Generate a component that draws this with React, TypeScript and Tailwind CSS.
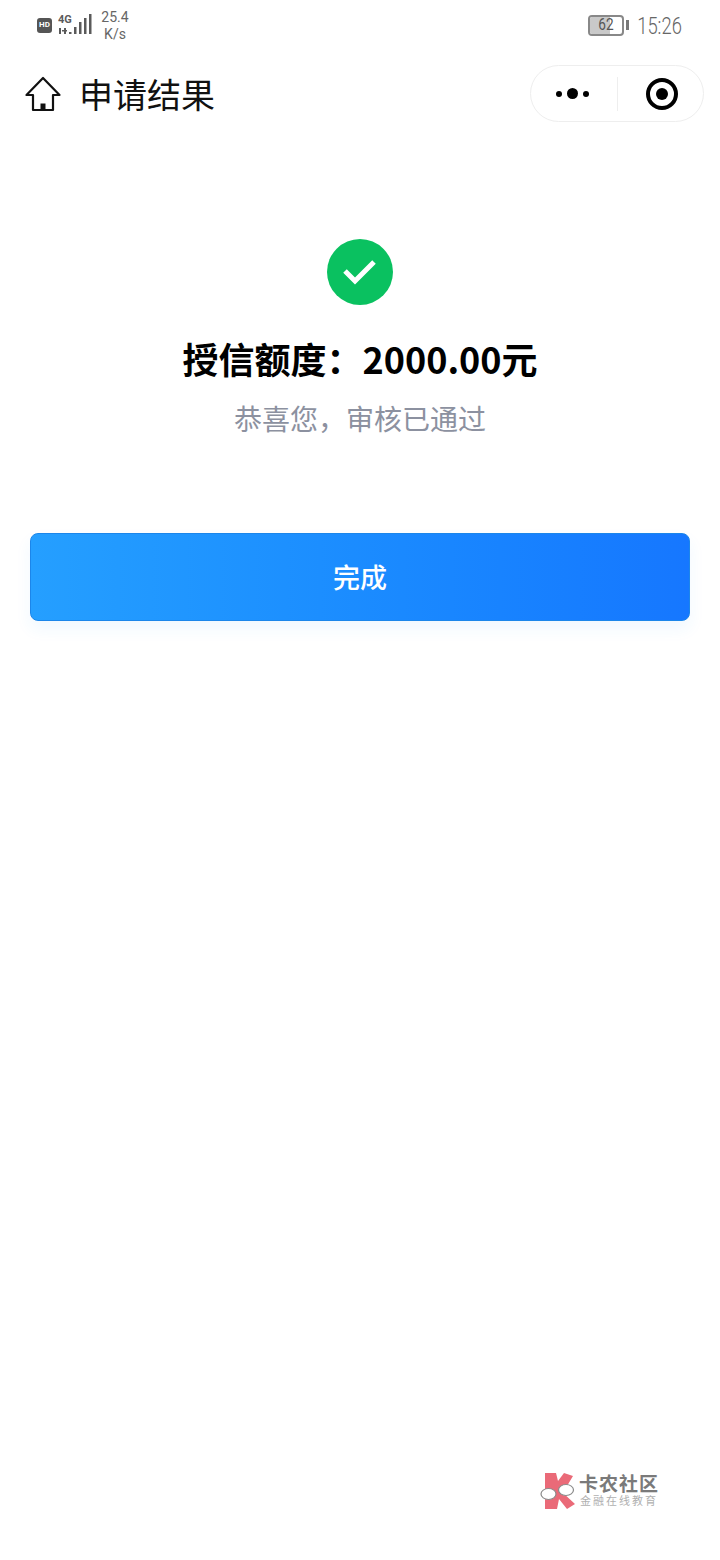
import React from 'react'

const cjk = "font-['Noto_Sans_CJK_SC','Noto_Sans',sans-serif]"

function SignalIcons() {
  return (
    <div className="flex items-center gap-[6px]">
      <div className="flex h-[15px] w-[15px] items-center justify-center rounded-[3px] bg-[#555] text-[8px] leading-none font-bold text-white font-['Roboto',sans-serif]">
        HD
      </div>
      <svg width="34" height="24" viewBox="0 0 34 24" fill="#5a5a5a">
        <text x="0" y="10" fontSize="11" fontWeight="700" fontFamily="Roboto, sans-serif">4G</text>
        <rect x="1" y="15" width="2" height="6" />
        <rect x="4" y="17" width="5" height="1.5" />
        <rect x="6" y="15" width="2" height="6" />
        <rect x="11" y="19" width="2.5" height="2" />
        <rect x="16" y="14" width="2.5" height="7" />
        <rect x="21" y="9" width="2.5" height="12" />
        <rect x="26" y="5" width="2.5" height="16" />
        <rect x="31" y="1" width="2.5" height="20" />
      </svg>
    </div>
  )
}

function StatusBar() {
  return (
    <div className="flex h-[50px] items-center justify-between pr-[38px] pl-[37px] text-[#666]">
      <div className="flex items-center gap-[8px]">
        <SignalIcons />
        <div className="mt-[2px] flex w-[30px] flex-col items-center text-[14px] leading-[17px] font-['Roboto',sans-serif]">
          <span>25.4</span>
          <span>K/s</span>
        </div>
      </div>
      <div className="flex items-center gap-[7px]">
        <div className="flex items-center gap-[2px]">
          <div className="relative h-[21px] w-[36px] overflow-hidden rounded-[4px] border-2 border-[#888]">
            <div className="h-full w-[62%] bg-[#c9c9c9]" />
            <span className="absolute inset-0 flex scale-x-85 items-center justify-center text-[16px] leading-none text-[#555] font-['Roboto',sans-serif]">
              62
            </span>
          </div>
          <div className="h-[10px] w-[3px] bg-[#777]" />
        </div>
        <div className="mt-[3px] flex w-[46px] justify-end text-[23px] leading-none font-light whitespace-nowrap font-['Roboto',sans-serif]">
          <span className="inline-block shrink-0 origin-right scale-x-80">15:26</span>
        </div>
      </div>
    </div>
  )
}

function NavBar() {
  return (
    <div className="mt-[15px] flex h-[57px] items-center justify-between pr-[16px] pl-[25px]">
      <div className="flex items-center gap-[18px]">
        <svg width="36" height="36" viewBox="0 0 36 36" fill="none" stroke="#111" strokeWidth="2.2" strokeLinejoin="round">
          <path d="M18 2 L1.5 19 H8 V34 H28 V19 H34.5 Z" />
          <path d="M15.5 34 V27.5 H20.5 V34" fill="#111" stroke="none" />
        </svg>
        <span className={`text-[34px] leading-none text-[#111] ${cjk}`}>申请结果</span>
      </div>
      <div className="flex h-[57px] w-[174px] items-center rounded-full border border-[#eeeeee] bg-white">
        <div className="flex flex-1 items-center justify-center gap-[5px] pr-[2px]">
          <span className="size-[6px] rounded-full bg-black" />
          <span className="size-[11px] rounded-full bg-black" />
          <span className="size-[6px] rounded-full bg-black" />
        </div>
        <div className="ml-[1px] h-[34px] w-px bg-[#eeeeee]" />
        <div className="flex flex-1 items-center justify-center pl-[3px]">
          <div className="flex size-[32px] items-center justify-center rounded-full border-[4px] border-black">
            <span className="size-[12px] rounded-full bg-black" />
          </div>
        </div>
      </div>
    </div>
  )
}

function Watermark() {
  return (
    <div className="absolute top-[1472px] left-[540px] flex items-start gap-[3px]">
      <svg width="36" height="38" viewBox="0 0 36 38">
        <path
          d="M5 1 H16 L18 9 L24 1 L33 4 L27 14 L22 20 L35 32 L27 37 L19 27 L17 37 H5 Z"
          fill="#ea6a78"
        />
        <ellipse cx="8.5" cy="22" rx="7.5" ry="5.5" fill="#fff" stroke="#8a8a8a" strokeWidth="1.2" />
        <ellipse cx="26" cy="18" rx="7.5" ry="5.5" fill="#fff" stroke="#8a8a8a" strokeWidth="1.2" />
      </svg>
      <div className={`flex flex-col ${cjk}`}>
        <span className="text-[19px] leading-[22px] font-bold tracking-[1px] whitespace-nowrap text-[#7a7a7a]">卡农社区</span>
        <span className="ml-[1px] text-[11px] leading-[12px] tracking-[2px] whitespace-nowrap text-[#b0b0b0]">金融在线教育</span>
      </div>
    </div>
  )
}

export default function App() {
  return (
    <div className={`relative h-[1560px] w-[720px] overflow-hidden bg-white ${cjk}`}>
      <StatusBar />
      <NavBar />

      <div className="mt-[117px] flex flex-col items-center">
        <div className="flex size-[66px] items-center justify-center rounded-full bg-[#0ac160]">
          <svg width="36" height="28" viewBox="0 0 36 28" fill="none" stroke="#fff" strokeWidth="5">
            <path d="M3 13 L13 23 L32 4" />
          </svg>
        </div>
        <h1 className="mt-[27px] text-[36px] leading-[52px] font-bold whitespace-nowrap text-black">{'授信额度\uFF1A2000.00元'}</h1>
        <p className="mt-[14px] text-[28px] leading-[40px] whitespace-nowrap text-[#8c91a0]">{'恭喜您\uFF0C审核已通过'}</p>
      </div>

      <div className="mt-[95px] px-[30px]">
        <button className="flex h-[88px] w-full items-center justify-center rounded-[8px] border border-[#1c86ea] bg-gradient-to-r from-[#259fff] to-[#1677ff] text-[27px] font-medium text-white shadow-[0_8px_16px_rgba(37,150,255,0.07)]">
          完成
        </button>
      </div>

      <Watermark />
    </div>
  )
}
